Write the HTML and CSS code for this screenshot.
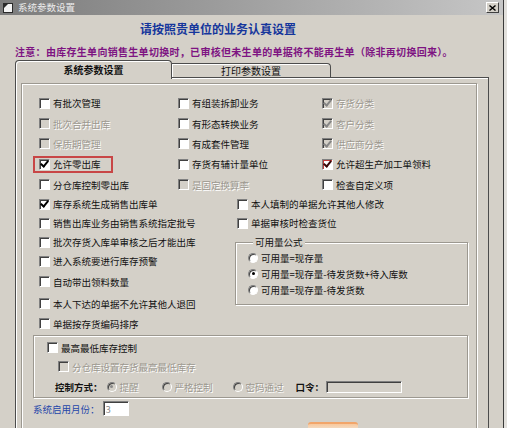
FILE: index.html
```html
<!DOCTYPE html>
<html lang="zh-CN">
<head>
    <meta charset="UTF-8">
    <meta name="viewport" content="width=device-width, initial-scale=1.0">
    <title>系统参数设置</title>
    <link rel="stylesheet" href="styles.css">
</head>
<body>
<div class="window">
    <div class="titlebar">
        <svg class="appicon" width="10" height="10" viewBox="0 0 10 10">
            <rect x="0.5" y="0.5" width="9" height="9" fill="#f4f4f4" stroke="#2a2a2a"/>
            <path d="M1 1 H5 L1 5 Z" fill="#2a2a2a"/>
        </svg>
        <span class="caption">系统参数设置</span>
        <span class="closebtn">
            <svg width="7" height="6" viewBox="0 0 7 6"><path d="M0.5 0.5 L6.5 5.5 M6.5 0.5 L0.5 5.5" stroke="#000" stroke-width="1.4"/></svg>
        </span>
    </div>

    <div class="client">
        <h1 class="heading">请按照贵单位的业务认真设置</h1>
        <p class="notice">注意：由库存生单向销售生单切换时，已审核但未生单的单据将不能再生单（除非再切换回来）。</p>

        <div class="tabs">
            <div class="tab active">系统参数设置</div>
            <div class="tab">打印参数设置</div>
        </div>

        <div class="panel">
            <div class="frame">
                <!-- 上部三列选项 -->
                <div class="topgrid">
                    <label class="chk"><span class="box"></span>有批次管理</label>
                    <label class="chk"><span class="box"></span>有组装拆卸业务</label>
                    <label class="chk on dis"><span class="box"></span>存货分类</label>

                    <label class="chk dis"><span class="box"></span>批次合并出库</label>
                    <label class="chk"><span class="box"></span>有形态转换业务</label>
                    <label class="chk on dis"><span class="box"></span>客户分类</label>

                    <label class="chk dis"><span class="box"></span>保质期管理</label>
                    <label class="chk"><span class="box"></span>有成套件管理</label>
                    <label class="chk on dis"><span class="box"></span>供应商分类</label>

                    <label class="chk on mark"><span class="box"></span>允许零出库</label>
                    <label class="chk"><span class="box"></span>存货有辅计量单位</label>
                    <label class="chk on redcheck"><span class="box"></span>允许超生产加工单领料</label>

                    <label class="chk"><span class="box"></span>分仓库控制零出库</label>
                    <label class="chk dis"><span class="box"></span>是固定换算率</label>
                    <label class="chk"><span class="box"></span>检查自定义项</label>
                </div>

                <!-- 中部：左列选项 + 可用量公式 -->
                <div class="mid">
                    <div class="leftcol">
                        <label class="chk on"><span class="box"></span>库存系统生成销售出库单</label>
                        <label class="chk"><span class="box"></span>销售出库业务由销售系统指定批号</label>
                        <label class="chk"><span class="box"></span>批次存货入库单审核之后才能出库</label>
                        <label class="chk"><span class="box"></span>进入系统要进行库存预警</label>
                        <label class="chk"><span class="box"></span>自动带出领料数量</label>
                        <label class="chk"><span class="box"></span>本人下达的单据不允许其他人退回</label>
                        <label class="chk"><span class="box"></span>单据按存货编码排序</label>
                    </div>
                    <div class="rightcol">
                        <label class="chk row19"><span class="box"></span>本人填制的单据允许其他人修改</label>
                        <label class="chk row19"><span class="box"></span>单据审核时检查货位</label>
                        <div class="group formula">
                            <div class="group-title">可用量公式</div>
                            <label class="radio"><span class="dot"></span>可用量=现存量</label>
                            <label class="radio sel"><span class="dot"></span>可用量=现存量-待发货数+待入库数</label>
                            <label class="radio"><span class="dot"></span>可用量=现存量-待发货数</label>
                        </div>
                    </div>
                </div>

                <!-- 库存上下限控制 -->
                <div class="group stock">
                    <label class="chk srow1"><span class="box"></span>最高最低库存控制</label>
                    <label class="chk dis srow2"><span class="box"></span>分仓库设置存货最高最低库存</label>
                    <div class="srow3">
                        <span class="bold">控制方式：</span>
                        <label class="radio dis sel opt1"><span class="dot"></span>提醒</label>
                        <label class="radio dis opt2"><span class="dot"></span>严格控制</label>
                        <label class="radio dis opt3"><span class="dot"></span>密码通过</label>
                        <span class="bold pwdlabel">口令：</span>
                        <input class="field pwd" type="text" disabled>
                    </div>
                </div>

                <div class="monthrow">
                    <span class="monthlabel">系统启用月份：</span>
                    <input class="field month" type="text" value="3">
                </div>

                <div class="okbtn"></div>
            </div>
        </div>
    </div>
</div>
</body>
</html>
```

FILE: styles.css
```css
* {
    box-sizing: border-box;
}
body {
    margin: 0;
    background: #e2e0dc;
    font-family: "Noto Sans CJK SC", sans-serif;
    font-size: 9.5px;
    color: #111;
}
.window {
    width: 504px;
    height: 428px;
    overflow: hidden;
    background: #d4d0c8;
    border-right: 1px solid #3a3a3a;
}
.titlebar {
    height: 15px;
    display: flex;
    align-items: center;
    gap: 5px;
    padding: 0 3px 0 3px;
    background: linear-gradient(90deg, #7c7c7c, #c6c6c6);
    color: #ececec;
}
.caption {
    flex: 1;
    line-height: 15px;
}
.closebtn {
    width: 13px;
    height: 11px;
    margin-right: 1px;
    background: #d4d0c8;
    border: 1px solid;
    border-color: #fff #404040 #404040 #fff;
    display: flex;
    align-items: center;
    justify-content: center;
}
.heading {
    margin: 7px 0 0 140px;
    font-size: 12px;
    line-height: 14px;
    font-weight: bold;
    color: #15369c;
}
.notice {
    margin: 10px 0 0 15px;
    font-size: 10px;
    line-height: 12px;
    letter-spacing: 0.3px;
    font-weight: bold;
    color: #7e1482;
}

/* 选项卡 */
.tabs {
    display: flex;
    align-items: flex-end;
    height: 17px;
    margin: 2px 0 0 15px;
}
.tab {
    border: 1px solid #4c4c4c;
    border-bottom: 0;
    border-radius: 4px 4px 0 0;
    box-shadow: inset 1px 1px #fff;
    background: #d4d0c8;
    text-align: center;
    font-size: 10px;
}
.tab.active {
    width: 157px;
    height: 19px;
    margin-bottom: -2px;
    line-height: 17px;
    font-weight: bold;
    position: relative;
    z-index: 1;
}
.tab:not(.active) {
    width: 159px;
    height: 14px;
    line-height: 13px;
    border-left: 0;
    border-top-left-radius: 0;
}
.panel {
    margin-left: 15px;
    width: 474px;
    height: 400px;
    border: 1px solid #4c4c4c;
    box-shadow: inset 1px 1px #fff;
    padding: 5px 0 0 5px;
}
.frame {
    width: 456px;
    height: 390px;
    border: 1px solid #9c9890;
    box-shadow: 1px 1px 0 #fff, inset 1px 1px 0 #fff;
    padding: 9px 0 0 17px;
}

/* 复选框 */
.chk {
    display: flex;
    align-items: center;
    gap: 3px;
    white-space: nowrap;
}
.box {
    flex: none;
    width: 11px;
    height: 11px;
    background: #fff;
    border: 1px solid;
    border-color: #808080 #fff #fff #808080;
    box-shadow: inset 1px 1px #404040;
    display: flex;
    align-items: center;
    justify-content: center;
}
.chk.on .box::after {
    content: "";
    width: 3px;
    height: 6px;
    margin-top: -2px;
    border: solid #000;
    border-width: 0 2px 2px 0;
    transform: rotate(40deg);
}
.chk.dis {
    color: #9c988f;
    text-shadow: 1px 1px 0 #fff;
}
.chk.dis .box {
    background: #d4d0c8;
}
.chk.dis.on .box::after {
    border-color: #858585;
}
.chk.redcheck .box {
    box-shadow: inset 1px 1px #c03a3a;
}
.chk.redcheck .box::after {
    border-color: #3a0606;
}
.mark {
    justify-self: start;
    height: 17px;
    margin-left: -6px;
    padding: 0 10px 0 4px;
    border: 2px solid #c84646;
}

/* 单选 */
.radio {
    display: flex;
    align-items: center;
    gap: 3px;
    white-space: nowrap;
}
.dot {
    flex: none;
    width: 10px;
    height: 10px;
    border-radius: 50%;
    background: #fff;
    border: 1px solid;
    border-color: #808080 #fff #fff #808080;
    box-shadow: inset 1px 1px #404040;
    display: flex;
    align-items: center;
    justify-content: center;
}
.radio.sel .dot::after {
    content: "";
    width: 3px;
    height: 3px;
    border-radius: 50%;
    background: #000;
}
.radio.dis {
    color: #9c988f;
    text-shadow: 1px 1px 0 #fff;
}
.radio.dis .dot {
    background: #d4d0c8;
}
.radio.dis.sel .dot::after {
    background: #8a8a8a;
}

.topgrid {
    display: grid;
    grid-template-columns: 139px 144px 1fr;
    grid-template-rows: repeat(5, 20.4px);
    align-items: center;
}
.mid {
    display: flex;
}
.leftcol {
    width: 198px;
    display: grid;
    grid-template-rows: 19px 19px 19px 19px 22px 22px 18px;
    align-items: center;
}
.rightcol {
    display: flex;
    flex-direction: column;
}
.row19 {
    height: 19px;
}

/* 分组框 */
.group {
    border: 1px solid #9c9890;
    box-shadow: inset 1px 1px #fff, 1px 1px #fff;
}
.group-title {
    display: table;
    margin: -7px 0 2px 5px;
    padding: 0 2px;
    line-height: 12px;
    background: #d4d0c8;
}
.formula {
    width: 233px;
    margin: 9px 0 0 -2px;
    padding: 0 0 6px 12px;
}
.formula .radio {
    height: 16px;
}
.stock {
    width: 435px;
    margin: 2px 0 0 -6px;
    padding: 3px 0 0 13px;
}
.srow1 {
    height: 18px;
}
.srow2 {
    height: 20px;
    padding-left: 11px;
}
.srow3 {
    height: 20px;
    padding-left: 8px;
    display: flex;
    align-items: center;
}
.bold {
    font-weight: bold;
}
.opt1 {
    margin-left: 4px;
}
.opt2 {
    margin-left: 23px;
}
.opt3 {
    margin-left: 20px;
}
.pwdlabel {
    margin-left: 12px;
}
.field {
    font: inherit;
    margin: 0;
    padding: 0 2px;
    border: 1px solid;
    border-color: #808080 #fff #fff #808080;
    box-shadow: inset 1px 1px #404040;
    outline: none;
}
.pwd {
    width: 76px;
    height: 12px;
    margin-left: 2px;
    background: #d4d0c8;
}
.monthrow {
    height: 22px;
    margin-left: -6px;
    display: flex;
    align-items: center;
}
.monthlabel {
    color: #2446a8;
}
.month {
    width: 26px;
    height: 15px;
    margin-left: 3px;
    background: #fff;
    color: #8a8a8a;
}
.okbtn {
    width: 50px;
    height: 22px;
    margin: 2px 0 0 269px;
    border-radius: 3px;
    border-top: 2px solid #f2a56a;
    background: linear-gradient(#f8c89c, #efe9e0 8px);
}
```
